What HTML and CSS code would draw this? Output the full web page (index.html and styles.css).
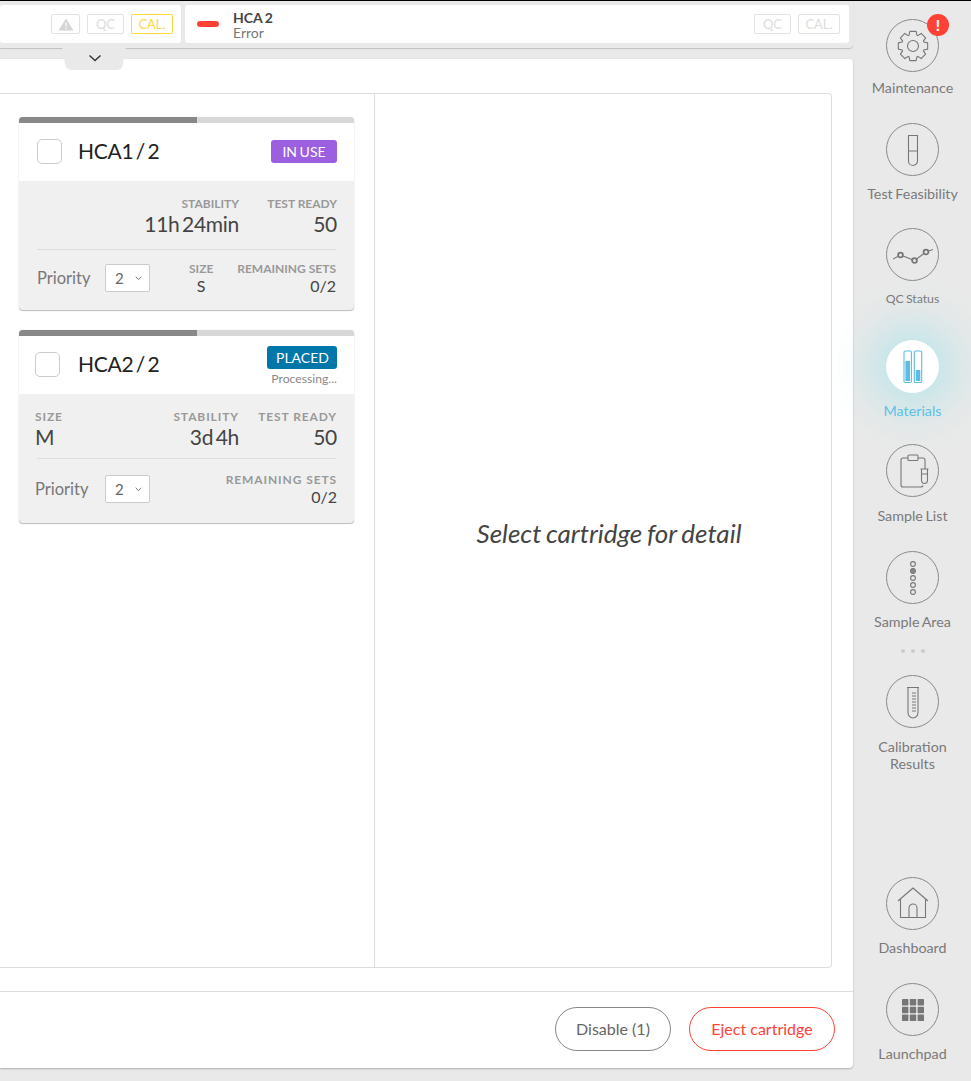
FILE: index.html
```html
<!DOCTYPE html>
<html lang="en">

<head>
    <meta charset="UTF-8">
    <title>Materials</title>
    <link rel="stylesheet" href="styles.css">
</head>

<body>
    <div class="main">
        <div class="status-bar">
            <div class="tile tile-first">
                <span class="tag tag-warn">
                    <svg width="16" height="13" viewBox="0 0 16 13"><path d="M8 0.5 L15.5 12.5 H0.5 Z" fill="#d4d4d4"/><path d="M8 4.5 V8.5 M8 9.8 V11" stroke="#fff" stroke-width="1.2"/></svg>
                </span>
                <span class="tag tag-qc">QC</span>
                <span class="tag tag-cal tag-on">CAL.</span>
            </div>
            <div class="tile tile-grow">
                <span class="dash"></span>
                <div class="tile-name">
                    <strong>HCA 2</strong>
                    <span>Error</span>
                </div>
                <span class="tag tag-qc tag-push">QC</span>
                <span class="tag tag-cal">CAL.</span>
            </div>
        </div>
        <button class="drawer-tab">
            <svg width="64" height="24" viewBox="0 0 64 24">
                <path d="M0 0 H64 L61 17 Q60 23 54 23 H10 Q4 23 3 17 Z" fill="#e9e9e9"/>
                <path d="M27.5 8.5 L33 13.5 L38.5 8.5" fill="none" stroke="#333" stroke-width="1.4"/>
            </svg>
        </button>

        <div class="panel">
            <div class="panel-content">
                <div class="box">
                    <div class="cartridges">
                        <div class="card">
                            <div class="progress"><div class="progress-fill"></div></div>
                            <div class="card-head">
                                <span class="check"></span>
                                <span class="card-title">HCA1 / 2</span>
                                <div class="state">
                                    <span class="badge badge-use">IN USE</span>
                                </div>
                            </div>
                            <div class="card-body">
                                <div class="row row-stats">
                                    <div class="stat stat-stability">
                                        <span class="stat-label">Stability</span>
                                        <span class="stat-value">11h 24min</span>
                                    </div>
                                    <div class="stat stat-ready">
                                        <span class="stat-label">Test ready</span>
                                        <span class="stat-value">50</span>
                                    </div>
                                </div>
                                <div class="rule"></div>
                                <div class="row row-priority">
                                    <span class="priority">Priority</span>
                                    <span class="select">2
                                        <svg width="7" height="5" viewBox="0 0 7 5"><path d="M0.7 0.8 L3.5 3.6 L6.3 0.8" fill="none" stroke="#777"/></svg>
                                    </span>
                                    <div class="stat stat-size">
                                        <span class="stat-label">Size</span>
                                        <span class="stat-small">S</span>
                                    </div>
                                    <div class="stat stat-sets">
                                        <span class="stat-label">Remaining sets</span>
                                        <span class="stat-small">0/2</span>
                                    </div>
                                </div>
                            </div>
                        </div>

                        <div class="card card-wide">
                            <div class="progress"><div class="progress-fill"></div></div>
                            <div class="card-head">
                                <span class="check"></span>
                                <span class="card-title">HCA2 / 2</span>
                                <div class="state">
                                    <span class="badge badge-placed">PLACED</span>
                                    <span class="state-note">Processing...</span>
                                </div>
                            </div>
                            <div class="card-body">
                                <div class="row row-stats">
                                    <div class="stat stat-left">
                                        <span class="stat-label">Size</span>
                                        <span class="stat-value">M</span>
                                    </div>
                                    <div class="stat stat-stability">
                                        <span class="stat-label">Stability</span>
                                        <span class="stat-value">3d 4h</span>
                                    </div>
                                    <div class="stat stat-ready">
                                        <span class="stat-label">Test ready</span>
                                        <span class="stat-value">50</span>
                                    </div>
                                </div>
                                <div class="rule"></div>
                                <div class="row row-priority">
                                    <span class="priority">Priority</span>
                                    <span class="select">2
                                        <svg width="7" height="5" viewBox="0 0 7 5"><path d="M0.7 0.8 L3.5 3.6 L6.3 0.8" fill="none" stroke="#777"/></svg>
                                    </span>
                                    <div class="stat stat-sets">
                                        <span class="stat-label">Remaining sets</span>
                                        <span class="stat-small">0/2</span>
                                    </div>
                                </div>
                            </div>
                        </div>
                    </div>
                    <div class="detail">Select cartridge for detail</div>
                </div>
            </div>
            <div class="panel-footer">
                <button class="pill">Disable (1)</button>
                <button class="pill pill-red">Eject cartridge</button>
            </div>
        </div>
    </div>

    <nav class="sidebar">
        <a class="nav-item">
            <span class="nav-circle">
                <svg class="icon" viewBox="-20 -20 40 40">
                    <polygon points="-3.12,-14.67 3.12,-14.67 3.93,-10.8 4.86,-10.41 8.17,-12.58 12.58,-8.17 10.41,-4.86 10.8,-3.93 14.67,-3.12 14.67,3.12 10.8,3.93 10.41,4.86 12.58,8.17 8.17,12.58 4.86,10.41 3.93,10.8 3.12,14.67 -3.12,14.67 -3.93,10.8 -4.86,10.41 -8.17,12.58 -12.58,8.17 -10.41,4.86 -10.8,3.93 -14.67,3.12 -14.67,-3.12 -10.8,-3.93 -10.41,-4.86 -12.58,-8.17 -8.17,-12.58 -4.86,-10.41 -3.93,-10.8"/>
                    <circle r="5.5"/>
                </svg>
                <span class="alert">!</span>
            </span>
            <span class="nav-label nav-label-tight">Maintenance</span>
        </a>
        <a class="nav-item">
            <span class="nav-circle">
                <svg class="icon" viewBox="-20 -20 40 40">
                    <path d="M-5 -14.5 H5 M-4.5 -14.5 V11 A4.5 4.5 0 0 0 4.5 11 V-14.5 M-4.5 1 H4.5"/>
                </svg>
            </span>
            <span class="nav-label">Test Feasibility</span>
        </a>
        <a class="nav-item">
            <span class="nav-circle">
                <svg class="icon" viewBox="-20 -20 40 40">
                    <path d="M-20 4 L-12.5 0 L1.5 5.5 L13 -3 L20 -5.5"/>
                    <circle class="node" cx="-12.5" cy="0" r="2.4"/>
                    <circle class="node" cx="1.5" cy="5.5" r="2.4"/>
                    <circle class="node" cx="13" cy="-3" r="2.4"/>
                </svg>
            </span>
            <span class="nav-label nav-label-small">QC Status</span>
        </a>
        <a class="nav-item nav-item-active">
            <span class="nav-circle">
                <svg class="icon" viewBox="-20 -20 40 40">
                    <rect x="-9" y="-16" width="7.4" height="31.5" rx="1.2"/>
                    <rect x="1.3" y="-16" width="7.4" height="31.5" rx="1.2"/>
                    <rect class="level" x="-7.6" y="-6" width="4.6" height="20"/>
                    <rect class="level" x="2.7" y="3" width="4.6" height="11"/>
                </svg>
            </span>
            <span class="nav-label">Materials</span>
        </a>
        <a class="nav-item">
            <span class="nav-circle">
                <svg class="icon" viewBox="-20 -20 40 40">
                    <path d="M-5 -13 H-10 A2 2 0 0 0 -12 -11 V14 A2 2 0 0 0 -10 16 H8 A2 2 0 0 0 10 14.5 M5 -13 H10 A2 2 0 0 1 12 -11 V-2"/>
                    <rect x="-5" y="-16" width="10" height="5.5" rx="1"/>
                    <path d="M7.5 -2 H15.5 M8.5 -2 V9 A3 3.5 0 0 0 14.5 9 V-2 M8.5 3 H14.5"/>
                </svg>
            </span>
            <span class="nav-label nav-label-low">Sample List</span>
        </a>
        <a class="nav-item">
            <span class="nav-circle">
                <svg class="icon" viewBox="-20 -20 40 40">
                    <circle cy="-14" r="2.4"/>
                    <circle class="dot-on" cy="-7" r="2.4"/>
                    <circle cy="0" r="2.4"/>
                    <circle cy="7" r="2.4"/>
                    <circle cy="14" r="2.4"/>
                </svg>
            </span>
            <span class="nav-label">Sample Area</span>
        </a>
        <div class="more"><i></i><i></i><i></i></div>
        <a class="nav-item">
            <span class="nav-circle">
                <svg class="icon" viewBox="-20 -20 40 40">
                    <path d="M-6 -14.5 H6 M-5 -14.5 V10.5 A5 5.5 0 0 0 5 10.5 V-14.5"/>
                    <path class="ticks" d="M-1 -9 H3 M-1 -6 H3 M-1 -3 H3 M-1 0 H3 M-1 3 H3 M-1 6 H3 M-1 9 H3"/>
                </svg>
            </span>
            <span class="nav-label nav-label-low">Calibration<br>Results</span>
        </a>
        <a class="nav-item">
            <span class="nav-circle">
                <svg class="icon" viewBox="-20 -20 40 40">
                    <path d="M-15 -3 L0 -16 L15 -3 M-12.5 -5 V13.5 H12.5 V-5 M-4 13.5 V4 A4 4 0 0 1 4 4 V13.5"/>
                </svg>
            </span>
            <span class="nav-label">Dashboard</span>
        </a>
        <a class="nav-item">
            <span class="nav-circle">
                <svg class="icon icon-solid" viewBox="-20 -20 40 40">
                    <rect x="-11" y="-11" width="6.4" height="6.4" rx="0.6"/>
                    <rect x="-3.2" y="-11" width="6.4" height="6.4" rx="0.6"/>
                    <rect x="4.6" y="-11" width="6.4" height="6.4" rx="0.6"/>
                    <rect x="-11" y="-3.2" width="6.4" height="6.4" rx="0.6"/>
                    <rect x="-3.2" y="-3.2" width="6.4" height="6.4" rx="0.6"/>
                    <rect x="4.6" y="-3.2" width="6.4" height="6.4" rx="0.6"/>
                    <rect x="-11" y="4.6" width="6.4" height="6.4" rx="0.6"/>
                    <rect x="-3.2" y="4.6" width="6.4" height="6.4" rx="0.6"/>
                    <rect x="4.6" y="4.6" width="6.4" height="6.4" rx="0.6"/>
                </svg>
            </span>
            <span class="nav-label">Launchpad</span>
        </a>
    </nav>
</body>

</html>
```

FILE: styles.css
```css
* {
    box-sizing: border-box;
}

html,
body {
    height: 100%;
    margin: 0;
}

body {
    display: flex;
    overflow: hidden;
    border-top: 1px solid #000;
    background-color: #e9e9e9;
    color: #444;
    font-family: "Lato", "Liberation Sans", sans-serif;
}

button {
    font-family: inherit;
}

/* left side */
.main {
    position: relative;
    display: flex;
    flex-direction: column;
    width: 854px;
    height: 100%;
    padding-bottom: 13px;
}

.status-bar {
    display: flex;
    flex: none;
    gap: 4px;
    height: 47px;
    margin-right: 1px;
    padding: 4px 4px 4px 0;
    border-radius: 0 0 4px 0;
    background-color: #e9e9e9;
    box-shadow: 0 1px 1px rgba(0, 0, 0, .18);
}

.tile {
    display: flex;
    align-items: center;
    gap: 7px;
    height: 38px;
    padding: 0 9px 0 0;
    border-radius: 3px;
    background-color: #fff;
}

.tile-first {
    justify-content: flex-end;
    width: 181px;
    padding-right: 8px;
}

.tile-grow {
    flex: 1;
    padding-left: 12px;
}

.tag {
    display: flex;
    align-items: center;
    justify-content: center;
    height: 20px;
    border: 1px solid #e2e2e2;
    border-radius: 2px;
    color: #ddd;
    font-size: 13px;
}

.tag-warn {
    width: 29px;
}

.tag-qc {
    width: 37px;
}

.tag-cal {
    width: 42px;
}

.tag-on {
    border-color: #ffd83d;
    color: #ffd83d;
}

.tag-push {
    margin-left: auto;
}

.dash {
    width: 22px;
    height: 6px;
    margin-right: 7px;
    border-radius: 3px;
    background-color: #ff4136;
}

.tile-name {
    display: flex;
    flex-direction: column;
    padding-top: 1px;
    line-height: 15px;
}

.tile-name strong {
    color: #444;
    font-size: 14px;
    word-spacing: -1px;
}

.tile-name span {
    color: #777;
    font-size: 14px;
}

.drawer-tab {
    position: absolute;
    top: 46px;
    left: 62px;
    width: 64px;
    height: 24px;
    padding: 0;
    border: 0;
    background: none;
    z-index: 2;
}

.drawer-tab svg {
    display: block;
}

.panel {
    display: flex;
    flex: 1;
    flex-direction: column;
    min-height: 0;
    margin: 11px 1px 0 0;
    border-radius: 0 4px 4px 0;
    background-color: #fff;
    box-shadow: 0 1px 2px rgba(0, 0, 0, .25);
}

.panel-content {
    flex: 1;
    min-height: 0;
    padding: 34px 21px 23px 0;
}

.box {
    display: flex;
    height: 100%;
    border: 1px solid #ddd;
    border-left: 0;
    border-radius: 0 4px 4px 0;
}

.cartridges {
    display: flex;
    flex: none;
    flex-direction: column;
    gap: 20px;
    width: 375px;
    padding: 23px 20px 0 19px;
    border-right: 1px solid #ddd;
}

.detail {
    display: flex;
    flex: 1;
    align-items: center;
    justify-content: center;
    padding: 4px 0 0 12px;
    color: #444;
    font-size: 26px;
    font-style: italic;
    word-spacing: -1.5px;
}

.panel-footer {
    display: flex;
    flex: none;
    justify-content: flex-end;
    gap: 18px;
    height: 77px;
    padding: 15px 18px 0 0;
    border-top: 1px solid #ddd;
}

.pill {
    width: 116px;
    height: 44px;
    padding: 0 0 2px;
    border: 1px solid #888;
    border-radius: 22px;
    background: #fff;
    color: #666;
    font-size: 16px;
}

.pill-red {
    width: 146px;
    border-color: #ff4136;
    color: #ff4136;
}

/* cartridge cards */
.card {
    overflow: hidden;
    border-radius: 4px;
    background-color: #f0f0f0;
    box-shadow: 0 1px 1px rgba(0, 0, 0, .25), 0 0 1px rgba(0, 0, 0, .2);
}

.progress {
    height: 6px;
    background-color: #d8d8d8;
}

.progress-fill {
    width: 178px;
    height: 100%;
    background-color: #888;
}

.card-head {
    display: flex;
    align-items: center;
    height: 58px;
    padding: 0 17px 2px 18px;
    background-color: #fff;
}

.card-wide .card-head {
    padding-left: 16px;
}

.check {
    width: 25px;
    height: 25px;
    margin-right: 16px;
    border: 1px solid #ccc;
    border-radius: 5px;
}

.card-wide .check {
    margin-right: 18px;
}

.card-title {
    margin-bottom: 2px;
    color: #222;
    font-size: 21px;
    letter-spacing: -.3px;
    word-spacing: -2.5px;
}

.state {
    display: flex;
    flex-direction: column;
    align-items: flex-end;
    margin-left: auto;
}

.card-wide .state {
    margin-top: 4px;
}

.badge {
    height: 23px;
    padding: 0 9px;
    border-radius: 3px;
    color: #fff;
    font-size: 14px;
    line-height: 23px;
    word-spacing: -1px;
}

.badge-use {
    width: 66px;
    background-color: #9b5fe0;
    text-align: center;
}

.badge-placed {
    width: 70px;
    background-color: #0077a8;
    text-align: center;
}

.state-note {
    margin-top: 3px;
    color: #888;
    font-size: 12.2px;
    line-height: 14px;
}

.card-body {
    height: 129px;
}

.row {
    display: flex;
    padding: 0 17px 0 18px;
}

.card-wide .row {
    padding-left: 16px;
}

.row-stats {
    justify-content: flex-end;
    height: 68px;
    padding-top: 15px;
}

.card-wide .row-stats {
    height: 64px;
}

.rule {
    height: 1px;
    margin: 0 18px;
    background-color: #ddd;
}

.row-priority {
    align-items: center;
    height: 60px;
    padding-right: 18px;
    padding-bottom: 4px;
}

.card-wide .row-priority {
    height: 64px;
    padding-right: 17px;
}

.stat {
    display: flex;
    flex-direction: column;
    align-items: flex-end;
}

.stat-left {
    align-items: flex-start;
    margin-right: auto;
}

.stat-ready {
    width: 98px;
}

.stat-label {
    color: #999;
    font-size: 12px;
    font-weight: 700;
    line-height: 15px;
    text-transform: uppercase;
    white-space: nowrap;
}

.card-wide .stat-label {
    letter-spacing: .9px;
}

.stat-value {
    color: #444;
    font-size: 21px;
    letter-spacing: -.3px;
    line-height: 26px;
    white-space: nowrap;
    word-spacing: -2.5px;
}

.stat-small {
    color: #444;
    font-size: 16px;
    line-height: 20px;
}

.stat-size {
    align-items: center;
    margin-left: 39px;
}

.stat-sets {
    margin-left: auto;
}

.priority {
    width: 68px;
    color: #777;
    font-size: 16.5px;
}

.card-wide .priority {
    width: 70px;
}

.select {
    display: flex;
    align-items: center;
    justify-content: space-between;
    width: 45px;
    height: 28px;
    padding: 0 7px 0 9px;
    border: 1px solid #ccc;
    border-radius: 2px;
    background-color: #fff;
    color: #666;
    font-size: 15px;
}

/* right nav */
.sidebar {
    display: grid;
    flex: none;
    grid-template-rows: 104px 105px 112px 104px 107px 94px 30px 1fr 106px 98px;
    width: 117px;
    padding-top: 18px;
}

.nav-item {
    display: flex;
    flex-direction: column;
    align-items: center;
    color: #7a7a7a;
    text-align: center;
}

.nav-circle {
    position: relative;
    display: flex;
    flex: none;
    align-items: center;
    justify-content: center;
    width: 53px;
    height: 53px;
    border: 1px solid #8a8a8a;
    border-radius: 50%;
}

.nav-label {
    margin-top: 9px;
    font-size: 14.3px;
    line-height: 17px;
    word-spacing: -1px;
}

.nav-label-tight {
    margin-top: 7px;
}

.nav-label-low {
    margin-top: 10px;
}

.nav-label-small {
    font-size: 12.3px;
}

.icon {
    width: 40px;
    height: 40px;
    fill: none;
    stroke: #777;
    stroke-width: 1.1;
    stroke-linejoin: round;
}

.icon .node {
    fill: #e9e9e9;
    stroke-width: 1.8;
}

.icon .dot-on {
    fill: #888;
}

.icon .ticks {
    stroke-width: 1;
}

.icon-solid {
    fill: #777;
    stroke: none;
}

.alert {
    position: absolute;
    top: -6px;
    right: -11px;
    width: 22px;
    height: 22px;
    border-radius: 50%;
    background-color: #ff4136;
    color: #fff;
    font-size: 15px;
    font-weight: 900;
    line-height: 22px;
    text-align: center;
}

.nav-item-active {
    color: #5bbce4;
}

.nav-item-active .nav-circle {
    border-color: #fff;
    background-color: #fff;
    box-shadow: 0 0 44px 14px rgba(120, 225, 235, .42);
}

.nav-item-active .icon {
    stroke: #5bbce4;
}

.nav-item-active .level {
    fill: #5bbce4;
    stroke: none;
}

.more {
    display: flex;
    justify-content: center;
    gap: 6px;
    padding-top: 4px;
}

.more i {
    width: 4px;
    height: 4px;
    border-radius: 50%;
    background-color: #ccc;
}
```
